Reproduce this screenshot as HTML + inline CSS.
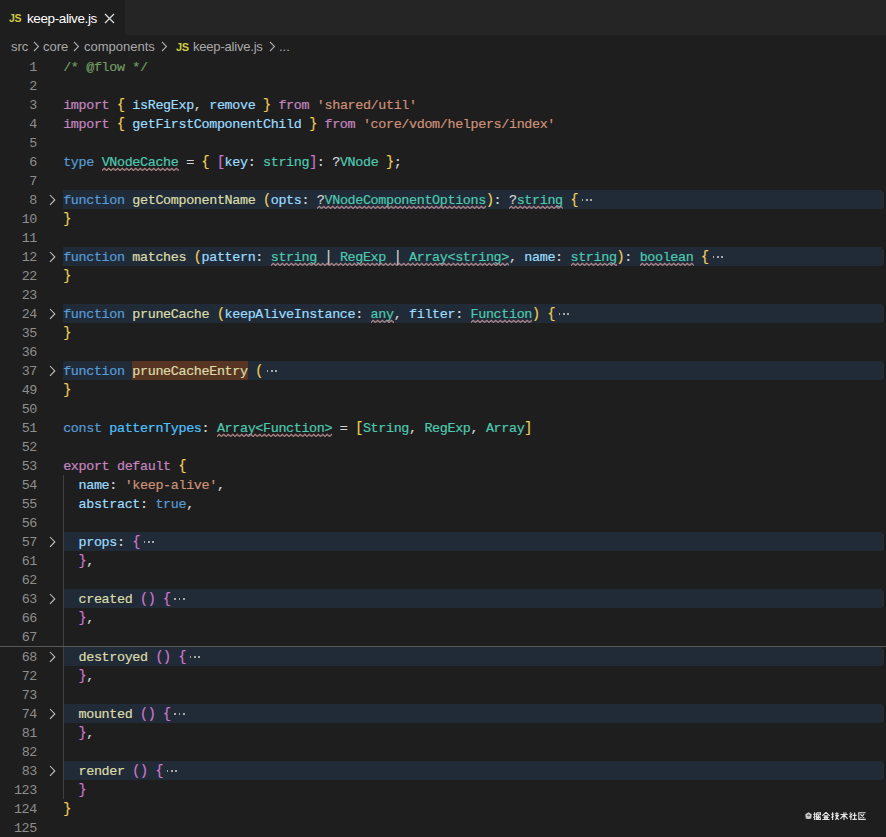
<!DOCTYPE html>
<html><head><meta charset="utf-8"><style>
html,body{margin:0;padding:0;}
body{width:886px;height:837px;overflow:hidden;background:#1e1e1e;position:relative;font-family:"Liberation Sans",sans-serif;}
.tabbar{position:absolute;left:0;top:0;width:886px;height:35px;background:#252526;}
.tab{position:absolute;left:0;top:0;width:125px;height:35px;background:#1e1e1e;}
.abs{position:absolute;white-space:pre;}
.ln{position:absolute;left:0;width:37px;text-align:right;height:19px;line-height:19px;margin-top:1px;font-family:"Liberation Mono",monospace;font-size:13.4px;letter-spacing:-0.351px;color:#8e8e8e;}
.cl{position:absolute;left:63.20px;height:19px;line-height:19px;margin-top:1px;font-family:"Liberation Mono",monospace;font-size:13.4px;letter-spacing:-0.351px;color:#D4D4D4;white-space:pre;-webkit-text-stroke:0.2px currentColor;}
.fb{position:absolute;left:63px;width:818.5px;height:19px;background:#212b37;}
.fm{position:absolute;height:19px;background:#573522;}
.ch{position:absolute;left:47px;}
.sq{position:absolute;height:4px;}
.dot{position:absolute;width:1.6px;height:1.6px;background:#a8a8a8;}
.pipe{display:inline-block;transform:scaleY(1.2);transform-origin:50% 40%;}
.guide{position:absolute;left:63px;width:1px;background:#404040;}
.seam{position:absolute;left:0;top:646px;width:886px;height:1px;background:#585858;}
.kw{color:#C586C0;}
.st{color:#569CD6;}
.v{color:#9CDCFE;}
.cv{color:#4FC1FF;}
.fn{color:#DCDCAA;}
.t{color:#4EC9B0;}
.s{color:#CE9178;}
.c{color:#739A62;}
.d{color:#D4D4D4;}
.b1{color:#F0CF5A;}
.b2{color:#CF78D2;}
.e{color:#8a8a8a;}
.b1,.b2{display:inline-block;transform:scaleY(1.12);transform-origin:50% 58%;}
</style></head><body>
<div class="tabbar"></div>
<div class="tab"></div>
<div class="abs" style="left:9px;top:12px;font-size:10.5px;font-weight:bold;color:#cbcb41;letter-spacing:-0.3px">JS</div>
<div class="abs" style="left:27px;top:11px;font-size:13.5px;letter-spacing:-0.4px;color:#ffffff;">keep-alive.js</div>
<svg class="abs" style="left:104px;top:13px" width="11" height="11" viewBox="0 0 11 11"><path d="M1 1 L10 10 M10 1 L1 10" stroke="#e0e0e0" stroke-width="1.2"/></svg>
<div class="abs" style="left:11px;top:39px;font-size:13px;color:#a9a9a9;">src</div>
<div class="abs" style="left:43px;top:39px;font-size:13px;color:#a9a9a9;">core</div>
<div class="abs" style="left:84px;top:39px;font-size:13px;color:#a9a9a9;">components</div>
<div class="abs" style="left:176px;top:41px;font-size:11px;font-weight:bold;color:#cbcb41;letter-spacing:-0.3px">JS</div>
<div class="abs" style="left:193px;top:39px;font-size:13px;letter-spacing:-0.2px;color:#a9a9a9;">keep-alive.js</div>
<div class="abs" style="left:279px;top:39px;font-size:13px;color:#a9a9a9;">...</div>
<svg class="abs" style="left:33px;top:41px" width="7" height="11" viewBox="0 0 7 11"><path d="M1 1 L5.5 5.5 L1 10" fill="none" stroke="#a9a9a9" stroke-width="1.1"/></svg>
<svg class="abs" style="left:73px;top:41px" width="7" height="11" viewBox="0 0 7 11"><path d="M1 1 L5.5 5.5 L1 10" fill="none" stroke="#a9a9a9" stroke-width="1.1"/></svg>
<svg class="abs" style="left:161px;top:41px" width="7" height="11" viewBox="0 0 7 11"><path d="M1 1 L5.5 5.5 L1 10" fill="none" stroke="#a9a9a9" stroke-width="1.1"/></svg>
<svg class="abs" style="left:269px;top:41px" width="7" height="11" viewBox="0 0 7 11"><path d="M1 1 L5.5 5.5 L1 10" fill="none" stroke="#a9a9a9" stroke-width="1.1"/></svg>
<svg width="0" height="0" style="position:absolute"><defs><pattern id="wave" width="4.5" height="5" patternUnits="userSpaceOnUse"><path d="M-2.25 1.3 L0 3.5 L2.25 1.3 L4.5 3.5 L6.75 1.3" fill="none" stroke="#bb8e92" stroke-width="1.25"/></pattern></defs></svg>
<div class="ln" style="top:57px">1</div>
<div class="cl" style="top:57px"><span class="c">/* @flow */</span></div>
<div class="ln" style="top:76px">2</div>
<div class="cl" style="top:76px"></div>
<div class="ln" style="top:95px">3</div>
<div class="cl" style="top:95px"><span class="kw">import</span> <span class="b1">{</span> <span class="v">isRegExp</span>, <span class="v">remove</span> <span class="b1">}</span> <span class="kw">from</span> <span class="s">&#x27;shared/util&#x27;</span></div>
<div class="ln" style="top:114px">4</div>
<div class="cl" style="top:114px"><span class="kw">import</span> <span class="b1">{</span> <span class="v">getFirstComponentChild</span> <span class="b1">}</span> <span class="kw">from</span> <span class="s">&#x27;core/vdom/helpers/index&#x27;</span></div>
<div class="ln" style="top:133px">5</div>
<div class="cl" style="top:133px"></div>
<div class="ln" style="top:152px">6</div>
<div class="cl" style="top:152px"><span class="st">type</span> <span class="t">VNodeCache</span> = <span class="b1">{</span> <span class="b2">[</span><span class="v">key</span>: <span class="t">string</span><span class="b2">]</span>: ?<span class="t">VNode</span> <span class="b1">}</span>;</div>
<svg class="sq" style="top:167px;left:101.65px" width="76.90" height="5"><rect width="100%" height="5" fill="url(#wave)"/></svg>
<div class="ln" style="top:171px">7</div>
<div class="cl" style="top:171px"></div>
<div class="fb" style="top:190px"></div>
<div class="abs" style="left:881.8px;top:191.5px;width:2.5px;height:16px;background:#2a2b2d"></div>
<div class="abs" style="left:884.3px;top:191.5px;width:1.7px;height:16px;background:#191b1f"></div>
<div class="ln" style="top:190px">8</div>
<svg class="ch" style="top:190px" width="10" height="19" viewBox="0 0 10 19"><path d="M3 5 L7.8 9.9 L3 14.8" fill="none" stroke="#c8c8c8" stroke-width="1.05"/></svg>
<div class="dot" style="top:199px;left:581.89px"></div>
<div class="dot" style="top:199px;left:586.29px"></div>
<div class="dot" style="top:199px;left:590.49px"></div>
<div class="cl" style="top:190px"><span class="st">function</span> <span class="fn">getComponentName</span> <span class="b1">(</span><span class="v">opts</span>: ?<span class="t">VNodeComponentOptions</span><span class="b1">)</span>: ?<span class="t">string</span> <span class="b1">{</span></div>
<svg class="sq" style="top:205px;left:316.97px" width="169.18" height="5"><rect width="100%" height="5" fill="url(#wave)"/></svg>
<svg class="sq" style="top:205px;left:509.22px" width="53.83" height="5"><rect width="100%" height="5" fill="url(#wave)"/></svg>
<div class="ln" style="top:209px">10</div>
<div class="cl" style="top:209px"><span class="b1">}</span></div>
<div class="ln" style="top:228px">11</div>
<div class="cl" style="top:228px"></div>
<div class="fb" style="top:247px"></div>
<div class="abs" style="left:881.8px;top:248.5px;width:2.5px;height:16px;background:#2a2b2d"></div>
<div class="abs" style="left:884.3px;top:248.5px;width:1.7px;height:16px;background:#191b1f"></div>
<div class="ln" style="top:247px">12</div>
<svg class="ch" style="top:247px" width="10" height="19" viewBox="0 0 10 19"><path d="M3 5 L7.8 9.9 L3 14.8" fill="none" stroke="#c8c8c8" stroke-width="1.05"/></svg>
<div class="dot" style="top:256px;left:712.62px"></div>
<div class="dot" style="top:256px;left:717.02px"></div>
<div class="dot" style="top:256px;left:721.22px"></div>
<div class="cl" style="top:247px"><span class="st">function</span> <span class="fn">matches</span> <span class="b1">(</span><span class="v">pattern</span>: <span class="t">string</span> <span class="pipe">|</span> <span class="t">RegExp</span> <span class="pipe">|</span> <span class="t">Array&lt;string&gt;</span>, <span class="v">name</span>: <span class="t">string</span><span class="b1">)</span>: <span class="t">boolean</span> <span class="b1">{</span></div>
<svg class="sq" style="top:262px;left:270.83px" width="238.39" height="5"><rect width="100%" height="5" fill="url(#wave)"/></svg>
<svg class="sq" style="top:262px;left:570.74px" width="46.14" height="5"><rect width="100%" height="5" fill="url(#wave)"/></svg>
<svg class="sq" style="top:262px;left:639.95px" width="53.83" height="5"><rect width="100%" height="5" fill="url(#wave)"/></svg>
<div class="ln" style="top:266px">22</div>
<div class="cl" style="top:266px"><span class="b1">}</span></div>
<div class="ln" style="top:285px">23</div>
<div class="cl" style="top:285px"></div>
<div class="fb" style="top:304px"></div>
<div class="abs" style="left:881.8px;top:305.5px;width:2.5px;height:16px;background:#2a2b2d"></div>
<div class="abs" style="left:884.3px;top:305.5px;width:1.7px;height:16px;background:#191b1f"></div>
<div class="ln" style="top:304px">24</div>
<svg class="ch" style="top:304px" width="10" height="19" viewBox="0 0 10 19"><path d="M3 5 L7.8 9.9 L3 14.8" fill="none" stroke="#c8c8c8" stroke-width="1.05"/></svg>
<div class="dot" style="top:313px;left:558.82px"></div>
<div class="dot" style="top:313px;left:563.22px"></div>
<div class="dot" style="top:313px;left:567.42px"></div>
<div class="cl" style="top:304px"><span class="st">function</span> <span class="fn">pruneCache</span> <span class="b1">(</span><span class="v">keepAliveInstance</span>: <span class="t">any</span>, <span class="v">filter</span>: <span class="t">Function</span><span class="b1">)</span> <span class="b1">{</span></div>
<svg class="sq" style="top:319px;left:370.80px" width="23.07" height="5"><rect width="100%" height="5" fill="url(#wave)"/></svg>
<svg class="sq" style="top:319px;left:470.77px" width="61.52" height="5"><rect width="100%" height="5" fill="url(#wave)"/></svg>
<div class="ln" style="top:323px">35</div>
<div class="cl" style="top:323px"><span class="b1">}</span></div>
<div class="ln" style="top:342px">36</div>
<div class="cl" style="top:342px"></div>
<div class="fb" style="top:361px"></div>
<div class="abs" style="left:881.8px;top:362.5px;width:2.5px;height:16px;background:#2a2b2d"></div>
<div class="abs" style="left:884.3px;top:362.5px;width:1.7px;height:16px;background:#191b1f"></div>
<div class="fm" style="top:361px;left:132.41px;width:115.35px"></div>
<div class="ln" style="top:361px">37</div>
<svg class="ch" style="top:361px" width="10" height="19" viewBox="0 0 10 19"><path d="M3 5 L7.8 9.9 L3 14.8" fill="none" stroke="#c8c8c8" stroke-width="1.05"/></svg>
<div class="dot" style="top:370px;left:266.60px"></div>
<div class="dot" style="top:370px;left:271.00px"></div>
<div class="dot" style="top:370px;left:275.19px"></div>
<div class="cl" style="top:361px"><span class="st">function</span> <span class="fn">pruneCacheEntry</span> <span class="b1">(</span></div>
<div class="ln" style="top:380px">49</div>
<div class="cl" style="top:380px"><span class="b1">}</span></div>
<div class="ln" style="top:399px">50</div>
<div class="cl" style="top:399px"></div>
<div class="ln" style="top:418px">51</div>
<div class="cl" style="top:418px"><span class="st">const</span> <span class="cv">patternTypes</span>: <span class="t">Array&lt;Function&gt;</span> = <span class="b1">[</span><span class="t">String</span>, <span class="t">RegExp</span>, <span class="t">Array</span><span class="b1">]</span></div>
<svg class="sq" style="top:433px;left:217.00px" width="115.35" height="5"><rect width="100%" height="5" fill="url(#wave)"/></svg>
<div class="ln" style="top:437px">52</div>
<div class="cl" style="top:437px"></div>
<div class="ln" style="top:456px">53</div>
<div class="cl" style="top:456px"><span class="kw">export</span> <span class="kw">default</span> <span class="b1">{</span></div>
<div class="ln" style="top:475px">54</div>
<div class="cl" style="top:475px">  <span class="v">name</span>: <span class="s">&#x27;keep-alive&#x27;</span>,</div>
<div class="ln" style="top:494px">55</div>
<div class="cl" style="top:494px">  <span class="v">abstract</span>: <span class="st">true</span>,</div>
<div class="ln" style="top:513px">56</div>
<div class="cl" style="top:513px"></div>
<div class="fb" style="top:532px"></div>
<div class="abs" style="left:881.8px;top:533.5px;width:2.5px;height:16px;background:#2a2b2d"></div>
<div class="abs" style="left:884.3px;top:533.5px;width:1.7px;height:16px;background:#191b1f"></div>
<div class="ln" style="top:532px">57</div>
<svg class="ch" style="top:532px" width="10" height="19" viewBox="0 0 10 19"><path d="M3 5 L7.8 9.9 L3 14.8" fill="none" stroke="#c8c8c8" stroke-width="1.05"/></svg>
<div class="dot" style="top:541px;left:143.56px"></div>
<div class="dot" style="top:541px;left:147.96px"></div>
<div class="dot" style="top:541px;left:152.16px"></div>
<div class="cl" style="top:532px">  <span class="v">props</span>: <span class="b2">{</span></div>
<div class="ln" style="top:551px">61</div>
<div class="cl" style="top:551px">  <span class="b2">}</span>,</div>
<div class="ln" style="top:570px">62</div>
<div class="cl" style="top:570px"></div>
<div class="fb" style="top:589px"></div>
<div class="abs" style="left:881.8px;top:590.5px;width:2.5px;height:16px;background:#2a2b2d"></div>
<div class="abs" style="left:884.3px;top:590.5px;width:1.7px;height:16px;background:#191b1f"></div>
<div class="ln" style="top:589px">63</div>
<svg class="ch" style="top:589px" width="10" height="19" viewBox="0 0 10 19"><path d="M3 5 L7.8 9.9 L3 14.8" fill="none" stroke="#c8c8c8" stroke-width="1.05"/></svg>
<div class="dot" style="top:598px;left:174.31px"></div>
<div class="dot" style="top:598px;left:178.72px"></div>
<div class="dot" style="top:598px;left:182.91px"></div>
<div class="cl" style="top:589px">  <span class="fn">created</span> <span class="b2">()</span> <span class="b2">{</span></div>
<div class="ln" style="top:608px">66</div>
<div class="cl" style="top:608px">  <span class="b2">}</span>,</div>
<div class="ln" style="top:627px">67</div>
<div class="cl" style="top:627px"></div>
<div class="fb" style="top:647px"></div>
<div class="abs" style="left:881.8px;top:648.5px;width:2.5px;height:16px;background:#2a2b2d"></div>
<div class="abs" style="left:884.3px;top:648.5px;width:1.7px;height:16px;background:#191b1f"></div>
<div class="ln" style="top:647px">68</div>
<svg class="ch" style="top:647px" width="10" height="19" viewBox="0 0 10 19"><path d="M3 5 L7.8 9.9 L3 14.8" fill="none" stroke="#c8c8c8" stroke-width="1.05"/></svg>
<div class="dot" style="top:656px;left:189.69px"></div>
<div class="dot" style="top:656px;left:194.09px"></div>
<div class="dot" style="top:656px;left:198.29px"></div>
<div class="cl" style="top:647px">  <span class="fn">destroyed</span> <span class="b2">()</span> <span class="b2">{</span></div>
<div class="ln" style="top:666px">72</div>
<div class="cl" style="top:666px">  <span class="b2">}</span>,</div>
<div class="ln" style="top:685px">73</div>
<div class="cl" style="top:685px"></div>
<div class="fb" style="top:704px"></div>
<div class="abs" style="left:881.8px;top:705.5px;width:2.5px;height:16px;background:#2a2b2d"></div>
<div class="abs" style="left:884.3px;top:705.5px;width:1.7px;height:16px;background:#191b1f"></div>
<div class="ln" style="top:704px">74</div>
<svg class="ch" style="top:704px" width="10" height="19" viewBox="0 0 10 19"><path d="M3 5 L7.8 9.9 L3 14.8" fill="none" stroke="#c8c8c8" stroke-width="1.05"/></svg>
<div class="dot" style="top:713px;left:174.31px"></div>
<div class="dot" style="top:713px;left:178.72px"></div>
<div class="dot" style="top:713px;left:182.91px"></div>
<div class="cl" style="top:704px">  <span class="fn">mounted</span> <span class="b2">()</span> <span class="b2">{</span></div>
<div class="ln" style="top:723px">81</div>
<div class="cl" style="top:723px">  <span class="b2">}</span>,</div>
<div class="ln" style="top:742px">82</div>
<div class="cl" style="top:742px"></div>
<div class="fb" style="top:761px"></div>
<div class="abs" style="left:881.8px;top:762.5px;width:2.5px;height:16px;background:#2a2b2d"></div>
<div class="abs" style="left:884.3px;top:762.5px;width:1.7px;height:16px;background:#191b1f"></div>
<div class="ln" style="top:761px">83</div>
<svg class="ch" style="top:761px" width="10" height="19" viewBox="0 0 10 19"><path d="M3 5 L7.8 9.9 L3 14.8" fill="none" stroke="#c8c8c8" stroke-width="1.05"/></svg>
<div class="dot" style="top:770px;left:166.62px"></div>
<div class="dot" style="top:770px;left:171.03px"></div>
<div class="dot" style="top:770px;left:175.22px"></div>
<div class="cl" style="top:761px">  <span class="fn">render</span> <span class="b2">()</span> <span class="b2">{</span></div>
<div class="ln" style="top:780px">123</div>
<div class="cl" style="top:780px">  <span class="b2">}</span></div>
<div class="ln" style="top:799px">124</div>
<div class="cl" style="top:799px"><span class="b1">}</span></div>
<div class="ln" style="top:818px">125</div>
<div class="cl" style="top:818px"></div><div class="guide" style="top:475px;height:324px"></div>
<div class="seam"></div>
<svg class="abs" style="left:812.9px;top:811.8px" width="8.5" height="8.5" viewBox="0 0 8.5 8.5"><path d="M0.3 2.3 H2.7 M1.6 0.3 V7.4 Q1.6 8 0.9 7.7 M0.3 5.6 L2.7 4.3 M3.6 0.9 H7.6 V2.7 H3.6 M3.6 0.9 V5 Q3.6 7 3 8 M5.6 3.2 V7.6 M4.4 4.2 V5.4 H7 V4.2 M4.2 6.1 V7.6 H7.6 V6.1" fill="none" stroke="#e2e2e2" stroke-width="1.15"/></svg>
<svg class="abs" style="left:822px;top:811.8px" width="8.5" height="8.5" viewBox="0 0 8.5 8.5"><path d="M4 0.4 L0.3 3.8 M4 0.4 L7.7 3.8 M2 3.9 H6 M1.5 5.4 H6.5 M4 3.9 V7.6 M0.4 7.6 H7.6 M2.3 6.1 L2.9 7 M5.7 6.1 L5.1 7" fill="none" stroke="#e2e2e2" stroke-width="1.15"/></svg>
<svg class="abs" style="left:831px;top:811.8px" width="8.5" height="8.5" viewBox="0 0 8.5 8.5"><path d="M0.3 2.3 H2.7 M1.6 0.3 V7.4 Q1.6 8 0.9 7.7 M0.3 5.6 L2.7 4.3 M3.9 1.7 H7.8 M5.9 0.3 V3.3 M4.2 3.6 H7.3 L4.4 7.8 M4.9 4.6 L7.8 7.8" fill="none" stroke="#e2e2e2" stroke-width="1.15"/></svg>
<svg class="abs" style="left:840px;top:811.8px" width="8.5" height="8.5" viewBox="0 0 8.5 8.5"><path d="M0.4 2.5 H7.6 M4 0.3 V7.9 M3.8 2.8 L0.4 6.8 M4.2 2.8 L7.6 6.8 M5.5 0.6 L6.4 1.5" fill="none" stroke="#e2e2e2" stroke-width="1.15"/></svg>
<svg class="abs" style="left:849px;top:811.8px" width="8.5" height="8.5" viewBox="0 0 8.5 8.5"><path d="M1.4 0.3 L1.9 1 M0.3 2 H2.8 L0.4 5.2 M1.8 3.6 V7.9 M2.1 4.4 L2.9 5.3 M3.6 3.4 H7.6 M5.6 0.6 V7.3 M3.3 7.4 H7.9" fill="none" stroke="#e2e2e2" stroke-width="1.15"/></svg>
<svg class="abs" style="left:858px;top:811.8px" width="8.5" height="8.5" viewBox="0 0 8.5 8.5"><path d="M7.6 0.7 H0.8 V7.3 H7.8 M2.4 2.2 L6.1 5.9 M6.1 2.2 L2.4 5.9" fill="none" stroke="#e2e2e2" stroke-width="1.15"/></svg>
<svg class="abs" style="left:804.6px;top:811.8px" width="7" height="7.5" viewBox="0 0 7 7.5"><path d="M3.5 0.3 L6.7 2.3 L6.2 6.4 L3.5 7.2 L0.8 6.4 L0.3 2.3 Z" fill="#c8c8c8"/><path d="M1.8 3.2 L3.5 2.3 L5.2 3.2 L3.5 4.6 Z" fill="#555"/></svg>
</body></html>
